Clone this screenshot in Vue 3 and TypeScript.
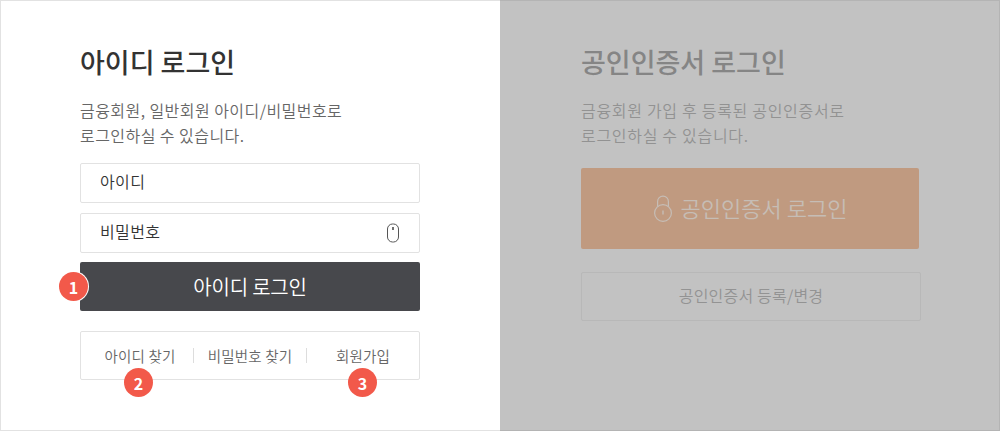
<script setup lang="ts">
// ─── Find links under the login button ──────────────────────────────────────
const findLinks = [
  { text: '아이디 찾기', step: 2 },
  { text: '비밀번호 찾기', step: null },
  { text: '회원가입', step: 3 },
]
</script>

<template>
  <div class="login">
    <!-- ID login -->
    <section class="panel panel--id">
      <h2 class="panel__title">아이디 로그인</h2>
      <p class="panel__desc">금융회원, 일반회원 아이디/비밀번호로<br />로그인하실 수 있습니다.</p>

      <div class="field"><span class="field__text">아이디</span></div>
      <div class="field field--pw">
        <span class="field__text">비밀번호</span>
        <svg class="mouse" width="14" height="20" viewBox="0 0 14 20" fill="none">
          <rect x="1.5" y="1" width="11" height="18" rx="5" stroke="#555" />
          <path d="M7 4v3" stroke="#333" stroke-width="1.4" />
        </svg>
      </div>

      <div class="submit">
        <span class="step step--one">1</span>
        아이디 로그인
      </div>

      <ul class="links">
        <li v-for="link in findLinks" :key="link.text" class="links__item">
          {{ link.text }}
          <span v-if="link.step" class="step step--link">{{ link.step }}</span>
        </li>
      </ul>
    </section>

    <!-- Certificate login (dimmed) -->
    <section class="panel panel--cert">
      <h2 class="panel__title">공인인증서 로그인</h2>
      <p class="panel__desc">금융회원 가입 후 등록된 공인인증서로<br />로그인하실 수 있습니다.</p>

      <div class="cert-btn">
        <svg width="20" height="28" viewBox="0 0 20 28" fill="none" stroke="#c6bdb5" stroke-width="1.2">
          <circle cx="10" cy="18" r="8.4" />
          <path d="M4.6 11.5V6.5a5.4 5.4 0 0 1 10.8 0v5" />
          <path d="M10 15.5v4" stroke-width="1.4" />
        </svg>
        <span class="cert-btn__text">공인인증서 로그인</span>
      </div>

      <div class="cert-manage"><span class="cert-manage__text">공인인증서 등록/변경</span></div>
    </section>
  </div>
</template>

<style>
html,
body {
  margin: 0;
  background: #fff;
}
</style>

<style scoped>
.login {
  display: flex;
  width: 1000px;
  height: 431px;
  box-sizing: border-box;
  font-family: 'Noto Sans CJK KR', 'Noto Sans', sans-serif;
}

.panel {
  width: 500px;
  box-sizing: border-box;
  border: 1px solid #e2e2e2;
  padding-top: 42px;
}

.panel--id {
  padding-left: 79px;
  background: #fff;
  border-right: 0;
}

.panel--cert {
  padding-left: 81px;
  background: #c2c2c2;
  border-color: #b4b4b4;
  border-left: 0;
}

.panel__title {
  margin: 0;
  font-size: 27px;
  line-height: 38px;
  font-weight: 500;
  color: #333;
}

.panel__desc {
  margin: 17px 0 0;
  font-size: 16px;
  line-height: 25px;
  letter-spacing: 0.45px;
  font-weight: 350;
  color: #666;
}

.panel--cert .panel__title {
  color: #858585;
}

.panel--cert .panel__desc {
  letter-spacing: 0.7px;
  color: #929292;
}

/* ── Fields ─────────────────────────────────────────────────────────────── */
.field {
  display: flex;
  align-items: center;
  justify-content: space-between;
  width: 340px;
  height: 40px;
  box-sizing: border-box;
  margin-top: 15px;
  padding: 0 19px;
  border: 1px solid #e2e2e2;
  border-radius: 2px;
  font-size: 16px;
  color: #333;
}

.field__text {
  margin-top: -4px;
  letter-spacing: 0.4px;
  font-weight: 350;
}

.field--pw {
  margin-top: 10px;
}

.submit {
  position: relative;
  display: flex;
  align-items: center;
  justify-content: center;
  width: 340px;
  height: 49px;
  margin-top: 9px;
  border-radius: 2px;
  background: #47484c;
  font-size: 20px;
  font-weight: 350;
  letter-spacing: -0.2px;
  color: #fff;
}

/* ── Links ──────────────────────────────────────────────────────────────── */
.links {
  display: flex;
  align-items: center;
  width: 340px;
  height: 49px;
  box-sizing: border-box;
  margin: 20px 0 0;
  padding: 0;
  list-style: none;
  border: 1px solid #e2e2e2;
  border-radius: 2px;
}

.links__item {
  position: relative;
  height: 15px;
  display: flex;
  align-items: center;
  justify-content: center;
  font-size: 14.5px;
  font-weight: 350;
  letter-spacing: 0.2px;
  color: #666;
  border-right: 1px solid #ddd;
  box-sizing: border-box;
}

.links__item:nth-child(1) {
  width: 113px;
  padding-left: 6px;
}

.links__item:nth-child(2) {
  width: 113px;
}

.links__item:nth-child(3) {
  flex: 1;
  border-right: 0;
}

/* ── Step badges ────────────────────────────────────────────────────────── */
.step {
  position: absolute;
  display: flex;
  align-items: center;
  justify-content: center;
  width: 29px;
  height: 29px;
  border-radius: 50%;
  background: #f2594a;
  font-size: 16px;
  font-weight: 700;
  letter-spacing: 0;
  color: #fff;
}

.step--one {
  left: -21px;
  top: 10px;
  box-shadow: 0 0 0 1px #fff;
}

.step--link {
  left: 43px;
  top: 20px;
}

.links__item:nth-child(3) .step--link {
  left: 41px;
}

/* ── Certificate actions ────────────────────────────────────────────────── */
.cert-btn {
  display: flex;
  align-items: center;
  justify-content: center;
  gap: 8px;
  width: 338px;
  height: 81px;
  margin-top: 20px;
  border-radius: 2px;
  background: #c09a80;
  font-size: 22px;
  font-weight: 350;
  color: #c6bdb5;
}

.cert-btn__text {
  margin-top: -4px;
}

.cert-manage {
  display: flex;
  align-items: center;
  justify-content: center;
  width: 340px;
  height: 49px;
  box-sizing: border-box;
  margin-top: 23px;
  border: 1px solid #b8b8b8;
  border-radius: 2px;
  font-size: 16px;
  letter-spacing: 0.2px;
  font-weight: 350;
  color: #939393;
}

.cert-manage__text {
  margin-top: -4px;
}
</style>
